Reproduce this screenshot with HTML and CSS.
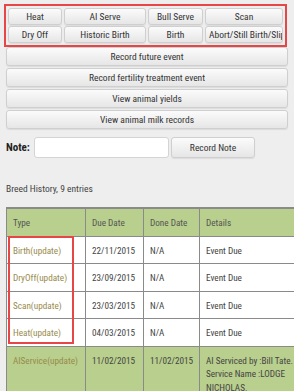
FILE: index.html
```html
<!DOCTYPE html>
<html lang="en">
<head>
  <meta charset="UTF-8" />
  <meta name="viewport" content="width=device-width, initial-scale=1.0"/>
  <title>Animal Events</title>
  <link rel="stylesheet" href="styles.css">
</head>
<body>
  <div class="quick">
    <button class="btn">Heat</button>
    <button class="btn">AI Serve</button>
    <button class="btn">Bull Serve</button>
    <button class="btn">Scan</button>
    <button class="btn">Dry Off</button>
    <button class="btn">Historic Birth</button>
    <button class="btn">Birth</button>
    <button class="btn">Abort/Still Birth/Slip</button>
  </div>

  <div class="actions">
    <button class="btn wide">Record future event</button>
    <button class="btn wide">Record fertility treatment event</button>
    <button class="btn wide">View animal yields</button>
    <button class="btn wide">View animal milk records</button>
  </div>

  <div class="note-row">
    <label class="note-label">Note:</label>
    <input type="text" class="note-input">
    <button class="btn note-btn">Record Note</button>
  </div>

  <div class="history-title">Breed History, 9 entries</div>

  <div class="history">
    <table class="breed-table">
      <colgroup>
        <col class="c-type"><col class="c-due"><col class="c-done"><col class="c-details">
      </colgroup>
      <thead>
        <tr><th>Type</th><th>Due Date</th><th>Done Date</th><th>Details</th></tr>
      </thead>
      <tbody>
        <tr><td class="type">Birth(update)</td><td>22/11/2015</td><td>N/A</td><td>Event Due</td></tr>
        <tr><td class="type">DryOff(update)</td><td>23/09/2015</td><td>N/A</td><td>Event Due</td></tr>
        <tr><td class="type">Scan(update)</td><td>23/03/2015</td><td>N/A</td><td>Event Due</td></tr>
        <tr><td class="type">Heat(update)</td><td>04/03/2015</td><td>N/A</td><td>Event Due</td></tr>
        <tr class="done"><td class="type">AIService(update)</td><td>11/02/2015</td><td>11/02/2015</td><td>AI Serviced by :Bill Tate. Service Name :LODGE NICHOLAS.</td></tr>
      </tbody>
    </table>
    <div class="mark"></div>
  </div>
</body>
</html>
```

FILE: styles.css
```css
html { overflow: hidden; }

body {
  margin: 0;
  padding: 4px 6px 0;
  background: #eeeeee;
  font-family: 'Liberation Sans Narrow', 'Roboto Condensed', 'DejaVu Sans Condensed', Roboto, sans-serif;
  font-size: 9.5px;
  color: #333;
}

.btn {
  font-family: inherit;
  font-size: 9.5px;
  color: #333;
  background: linear-gradient(#fbfbfb, #e6e6e6);
  border: 1px solid #cfcfcf;
  border-radius: 3px;
  box-shadow: 0 1px 1px rgba(0, 0, 0, 0.08);
  padding: 0 3px;
  white-space: nowrap;
  overflow: hidden;
  cursor: pointer;
}

.quick {
  margin: 0 1px 0 -2px;
  border: 2.5px solid #e64646;
  padding: 2px;
  display: grid;
  grid-template-columns: 54px 82px 55px 1fr;
  grid-auto-rows: 17px;
  gap: 1px 2px;
}

.quick .btn { text-align: center; }

.actions {
  display: flex;
  flex-direction: column;
  gap: 2px;
}

.wide { height: 19px; width: 100%; }

.note-row {
  display: flex;
  align-items: center;
  margin-top: 8px;
  height: 21px;
}

.note-label {
  font-weight: bold;
  font-size: 11px;
  color: #222;
  width: 28px;
}

.note-input {
  width: 135px;
  height: 21px;
  box-sizing: border-box;
  border: 1px solid #d4d4d4;
  border-radius: 3px;
  background: #fff;
}

.note-btn {
  width: 84px;
  height: 21px;
  margin-left: 2px;
}

.history-title {
  margin-top: 24px;
  line-height: 13px;
  color: #444;
}

.history {
  position: relative;
  margin-top: 12px;
  width: 305px;
}

.breed-table {
  border-collapse: collapse;
  table-layout: fixed;
  width: 305px;
  font-size: 9.2px;
  background: #fff;
  border: 1px solid #8a8a8a;
  border-top-width: 2px;
}

.c-type { width: 79px; }
.c-due { width: 58px; }
.c-done { width: 56px; }
.c-details { width: 112px; }

.breed-table th,
.breed-table td {
  border: 1px solid #8a8a8a;
  padding: 7px 6px 6px;
  line-height: 13.5px;
  text-align: left;
  vertical-align: top;
}

.breed-table th {
  background: #b9cf8d;
  font-weight: normal;
  color: #555;
}

.breed-table td { color: #444; }
.breed-table td.type { color: #978b4c; }
.breed-table tr.done td { background: #b9cf8d; }

.mark {
  position: absolute;
  left: 2px;
  top: 29px;
  width: 66px;
  height: 108px;
  border: 2.5px solid #e64646;
  box-sizing: border-box;
}
```
